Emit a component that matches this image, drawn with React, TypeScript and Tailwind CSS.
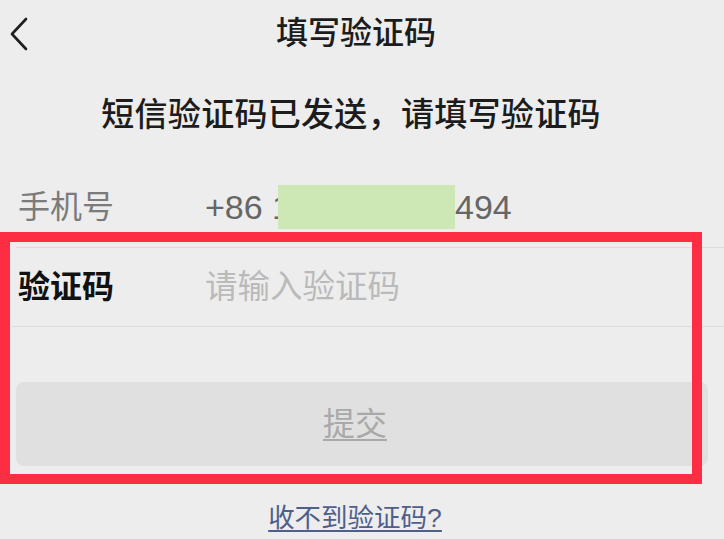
import React from "react";

export default function App() {
  return (
    <div
      className="relative w-[724px] h-[539px] overflow-hidden bg-[#ededed]"
      style={{ fontFamily: '"Liberation Sans", "Noto Sans CJK SC", sans-serif' }}
    >
      {/* Header */}
      <div className="grid h-[66px] grid-cols-[1fr_auto_1fr] items-center">
        <div className="pl-[9px] pt-[1px]">
          <svg width="20" height="34" viewBox="0 0 20 34" fill="none">
            <path d="M17 2 L3 17 L17 32" stroke="#1e1e1e" strokeWidth="2.6" strokeLinecap="round" strokeLinejoin="round" />
          </svg>
        </div>
        <div className="pr-[12px] text-[32px] leading-none text-[#1c1c1c] font-medium">填写验证码</div>
        <div />
      </div>

      {/* Heading */}
      <div className="flex h-[98px] items-center justify-center pb-[2px] pr-[22px] text-[33px] leading-none font-medium text-[#1c1c1c] tracking-[0.3px]">
        短信验证码已发送，请填写验证码
      </div>

      {/* Rows */}
      <div className="pt-[3px]">
        <div className="flex h-[80px] items-center pl-[18px]">
          <div className="w-[187px] text-[32px] leading-none text-[#7b7b7b]">手机号</div>
          <div className="flex items-center text-[34px] leading-none text-[#666666]">
            <span>+86 1</span>
            <span className="ml-[-13px] inline-block h-[44px] w-[177px] bg-[#cde8b5]" />
            <span>494</span>
          </div>
        </div>
        <div className="ml-[16px] h-px bg-[#dcdcdc]" />
        <div className="flex h-[78px] items-center pl-[18px]">
          <div className="w-[187px] text-[32px] leading-none font-bold text-[#111]">验证码</div>
          <div className="text-[32.5px] leading-none text-[#bababa]">请输入验证码</div>
        </div>
        <div className="ml-[12px] h-px bg-[#dcdcdc]" />
      </div>

      {/* Submit button */}
      <div className="px-[16px] pt-[55px]">
        <div className="flex h-[84px] w-[692px] items-center justify-center rounded-[8px] bg-[#e0e0e0] pr-[14px]">
          <span className="text-[32px] leading-none text-[#a9a9a9] underline decoration-[2px] underline-offset-[4px]">提交</span>
        </div>
      </div>

      {/* Link */}
      <div className="flex justify-center pt-[39px] pr-[14px]">
        <span className="text-[26.5px] leading-none text-[#4f5f8c] underline decoration-[2px] underline-offset-[3px]">收不到验证码?</span>
      </div>

      {/* Red annotation frame */}
      <div className="pointer-events-none absolute left-0 top-[232px] h-[252px] w-[702px] border-[10px] border-[#fd2d44]" />
    </div>
  );
}
